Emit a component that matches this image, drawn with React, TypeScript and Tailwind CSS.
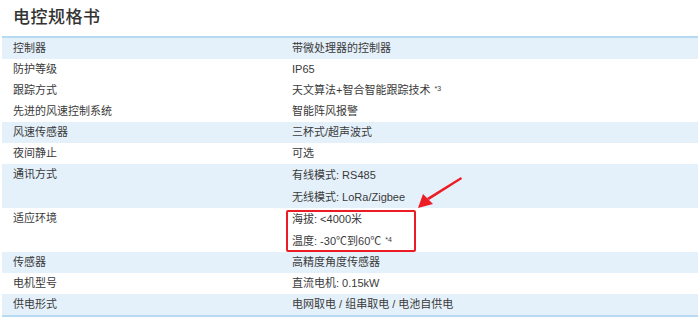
import React from "react";

type Row = { k: string; v: React.ReactNode[]; blue: boolean; box?: boolean };

const sup = (t: string) => (
  <span className="text-[7px] relative -top-[3px] ml-[4px]">{t}</span>
);

const rows: Row[] = [
  { k: "控制器", v: ["带微处理器的控制器"], blue: true },
  { k: "防护等级", v: ["IP65"], blue: false },
  { k: "跟踪方式", v: [<>天文算法+智合智能跟踪技术{sup("*3")}</>], blue: false },
  { k: "先进的风速控制系统", v: ["智能阵风报警"], blue: false },
  { k: "风速传感器", v: ["三杯式/超声波式"], blue: true },
  { k: "夜间静止", v: ["可选"], blue: false },
  { k: "通讯方式", v: ["有线模式: RS485", "无线模式: LoRa/Zigbee"], blue: true },
  { k: "适应环境", v: ["海拔: <4000米", <>温度: -30℃到60℃{sup("*4")}</>], blue: false, box: true },
  { k: "传感器", v: ["高精度角度传感器"], blue: true },
  { k: "电机型号", v: ["直流电机: 0.15kW"], blue: false },
  { k: "供电形式", v: ["电网取电 / 组串取电 / 电池自供电"], blue: true },
];

export default function App() {
  return (
    <div
      className="relative w-[700px] h-[323px] bg-white text-[#3a3a3a] overflow-hidden"
      style={{ fontFamily: '"Liberation Sans", "Noto Sans CJK SC", sans-serif' }}
    >
      <div className="h-[36px] flex items-center pl-[13px] text-[17px] text-[#333] font-medium tracking-[0.5px]">
        电控规格书
      </div>
      <div className="mx-[2px] w-[696px] border-t-2 border-b-2 border-[#b5daf1] text-[11px]">
        {rows.map((r, i) => {
          const h = r.v.length > 1 ? "h-[44px]" : "h-[21px]";
          return (
            <div key={i} className={`flex ${h} ${r.blue ? "bg-[#e5f1fa]" : "bg-white"}`}>
              <div className="w-[282px] pl-[11px] pt-[3px] leading-[15px]">{r.k}</div>
              <div className="flex-1 relative">
                {r.v.map((t, j) => (
                  <div
                    key={j}
                    className={`pl-[8px] leading-[15px] ${r.v.length > 1 ? "h-[22px] pt-[4px]" : "pt-[3px]"}`}
                  >
                    {t}
                  </div>
                ))}
                {r.box && (
                  <div className="absolute left-[2px] top-[2px] w-[130px] h-[42px] border-2 border-[#ec1c24] rounded-[2px]" />
                )}
              </div>
            </div>
          );
        })}
      </div>
      <svg className="absolute left-0 top-0" width="700" height="323" viewBox="0 0 700 323">
        <polygon points="461,177 462,179 429,200 427,198" fill="#ec1c24" />
        <polygon points="418,208 423,194 433,204" fill="#ec1c24" />
      </svg>
    </div>
  );
}
